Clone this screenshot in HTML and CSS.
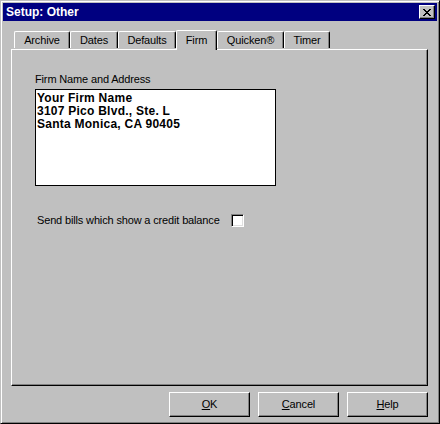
FILE: index.html
```html
<!DOCTYPE html>
<html lang="en">
<head>
<meta charset="utf-8">
<title>Setup: Other</title>
<link rel="stylesheet" href="styles.css">
</head>
<body>
<div class="window">
  <div class="titlebar">
    <span class="title">Setup: Other</span>
    <button class="close" aria-label="Close">
      <svg width="8" height="7" viewBox="0 0 8 7" shape-rendering="crispEdges">
        <path d="M0 0h2v1H0zM6 0h2v1H6zM1 1h2v1H1zM5 1h2v1H5zM2 2h4v1H2zM3 3h2v1H3zM2 4h4v1H2zM1 5h2v1H1zM5 5h2v1H5zM0 6h2v1H0zM6 6h2v1H6z" fill="#000"/>
      </svg>
    </button>
  </div>
  <div class="content">
    <div class="tabs">
      <div class="tab tab-archive">Archive</div>
      <div class="tab tab-dates">Dates</div>
      <div class="tab tab-defaults">Defaults</div>
      <div class="tab tab-firm active">Firm</div>
      <div class="tab tab-quicken">Quicken®</div>
      <div class="tab tab-timer">Timer</div>
    </div>
    <div class="panel">
      <div class="field-label">Firm Name and Address</div>
      <div class="address">Your Firm Name<br>3107 Pico Blvd., Ste. L<br>Santa Monica, CA 90405</div>
      <div class="check-row">
        <span class="check-label">Send bills which show a credit balance</span>
        <span class="checkbox"></span>
      </div>
    </div>
    <div class="buttons">
      <button class="btn"><u>O</u>K</button>
      <button class="btn"><u>C</u>ancel</button>
      <button class="btn"><u>H</u>elp</button>
    </div>
  </div>
</div>
</body>
</html>
```
FILE: styles.css
```css
* {
  box-sizing: border-box;
}

html, body {
  margin: 0;
  padding: 0;
  background: #c0c0c0;
}

body {
  font-family: "Liberation Sans", Arial, sans-serif;
  font-size: 11px;
  line-height: 13px;
  color: #000;
  letter-spacing: -0.15px;
}

.window {
  width: 440px;
  height: 424px;
  background: #c0c0c0;
  border: 1px solid;
  border-color: #c0c0c0 #000 #000 #c0c0c0;
  box-shadow: inset 1px 1px #fff, inset -1px -1px #808080;
  padding: 2px;
  display: flex;
  flex-direction: column;
}

.titlebar {
  height: 18px;
  background: #000080;
  display: flex;
  align-items: center;
  justify-content: space-between;
  padding: 0 2px 0 3px;
}

.title {
  color: #fff;
  font-weight: bold;
  font-size: 12px;
  letter-spacing: 0;
}

.close {
  width: 16px;
  height: 14px;
  padding: 0;
  margin: 0;
  background: #c0c0c0;
  border: 1px solid;
  border-color: #fff #000 #000 #fff;
  box-shadow: inset -1px -1px #808080;
  display: flex;
  align-items: center;
  justify-content: center;
  padding-right: 1px;
}

.close svg {
  display: block;
}

.content {
  flex: 1;
  padding: 0 9px 0 8px;
  display: flex;
  flex-direction: column;
}

.tabs {
  margin-top: 9px;
  height: 19px;
  display: flex;
  align-items: flex-end;
  padding-left: 3px;
}

.tab {
  height: 17px;
  margin-bottom: 1px;
  border-top: 1px solid #fff;
  border-left: 1px solid #fff;
  border-right: 1px solid #000;
  border-top-left-radius: 2px;
  border-top-right-radius: 2px;
  box-shadow: inset -1px 0 #808080;
  padding-top: 2px;
  text-align: center;
  background: #c0c0c0;
}

.tab.active {
  height: 20px;
  margin-bottom: -1px;
  padding-top: 3px;
  position: relative;
  z-index: 1;
}

.tab-archive { width: 56px; }
.tab-dates { width: 48px; }
.tab-defaults { width: 58px; }
.tab-firm { width: 41px; }
.tab-quicken { width: 67px; }
.tab-timer { width: 46px; }

.panel {
  height: 337px;
  border: 1px solid;
  border-color: #fff #000 #000 #fff;
  box-shadow: inset -1px -1px #808080;
  padding: 23px 0 0 23px;
}

.field-label {
  height: 13px;
  margin-bottom: 3px;
}

.address {
  width: 241px;
  height: 97px;
  background: #fff;
  border: 1px solid #000;
  padding: 2px 0 0 1px;
  font-weight: bold;
  font-size: 12px;
  letter-spacing: 0.25px;
  line-height: 13px;
}

.check-row {
  margin-top: 28px;
  padding-left: 2px;
  display: flex;
  align-items: center;
  gap: 11px;
  height: 13px;
}

.checkbox {
  width: 13px;
  height: 13px;
  background: #fff;
  border: 1px solid;
  border-color: #808080 #fff #fff #808080;
  box-shadow: inset 1px 1px #000, inset -1px -1px #dfdfdf;
}

.buttons {
  margin-top: 6px;
  display: flex;
  justify-content: flex-end;
  gap: 8px;
}

.btn {
  width: 81px;
  height: 25px;
  margin: 0;
  padding: 0;
  background: #c0c0c0;
  border: 1px solid;
  border-color: #fff #000 #000 #fff;
  box-shadow: inset -1px -1px #808080;
  font-family: "Liberation Sans", Arial, sans-serif;
  font-size: 11px;
  line-height: 13px;
  letter-spacing: -0.15px;
  color: #000;
}

.btn u {
  text-decoration: underline;
  text-underline-offset: 1px;
}
```
